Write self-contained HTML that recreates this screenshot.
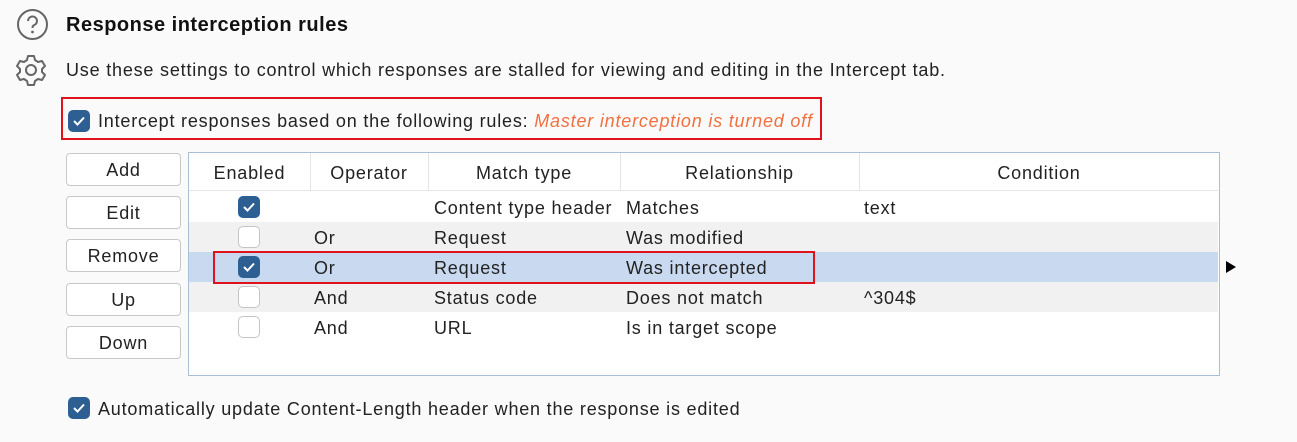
<!DOCTYPE html>
<html><head><style>
*{margin:0;padding:0;box-sizing:border-box}
body{width:1297px;height:442px;background:#fafafa;font-family:"Liberation Sans",sans-serif;color:#222;position:relative;overflow:hidden;font-size:18px;letter-spacing:0.8px}
.a{position:absolute;white-space:nowrap}
.cb{position:absolute;width:22px;height:22px;border-radius:5px;background:#2d5f93}
.cb svg{position:absolute;left:4px;top:4px}
.ub{position:absolute;width:22px;height:22px;border-radius:5px;border:1.5px solid #c4c4c4;background:#fff}
.btn{position:absolute;left:66px;width:115px;height:33px;border:1px solid #c8c8c8;border-radius:4px;background:#fff;text-align:center;line-height:33px}
.row{position:absolute;left:189px;width:1029px;height:30px}
.t{position:absolute;line-height:32px;white-space:nowrap}
.vl{position:absolute;top:153px;width:1px;height:38px;background:#e4e4e4}
</style></head><body>
<svg class="a" style="left:16px;top:8px" width="33" height="33" viewBox="0 0 33 33"><circle cx="16.5" cy="16.5" r="14.5" fill="none" stroke="#666" stroke-width="2"/><path d="M12 13a4.5 4.5 0 1 1 6 4.2c-1.3.6-1.5 1.3-1.5 2.8" fill="none" stroke="#666" stroke-width="2"/><circle cx="16.5" cy="24" r="1.4" fill="#666"/></svg>
<div class="a" style="left:66px;top:14px;font-size:20px;font-weight:bold;color:#111;letter-spacing:0.5px">Response interception rules</div>
<svg class="a" style="left:14px;top:53px" width="34" height="34" viewBox="0 0 34 34"><path d="M14 3h6l1 4 3 2 4-1 3 5-3 3v3l3 3-3 5-4-1-3 2-1 4h-6l-1-4-3-2-4 1-3-5 3-3v-3l-3-3 3-5 4 1 3-2z" fill="none" stroke="#666" stroke-width="2" stroke-linejoin="round"/><circle cx="17" cy="17" r="5" fill="none" stroke="#666" stroke-width="2"/></svg>
<div class="a" style="left:66px;top:60px">Use these settings to control which responses are stalled for viewing and editing in the Intercept tab.</div>
<div class="a" style="left:61px;top:97px;width:761px;height:43px;border:2px solid #e0121b"></div>
<div class="cb" style="left:68px;top:110px"><svg width="14" height="14"><path d="M2 7l3.5 3.5L12 3.5" fill="none" stroke="#fff" stroke-width="2"/></svg></div>
<div class="a" style="left:98px;top:111px">Intercept responses based on the following rules: <i style="color:#f07040">Master interception is turned off</i></div>
<div class="btn" style="top:153px">Add</div>
<div class="btn" style="top:196px">Edit</div>
<div class="btn" style="top:239px">Remove</div>
<div class="btn" style="top:283px">Up</div>
<div class="btn" style="top:326px">Down</div>
<div class="a" style="left:188px;top:152px;width:1032px;height:224px;border:1px solid #a8bfd8;background:#fff"></div>
<div class="a" style="left:189px;top:190px;width:1029px;height:1px;background:#e4e4e4"></div>
<div class="vl" style="left:310px"></div><div class="vl" style="left:428px"></div><div class="vl" style="left:620px"></div><div class="vl" style="left:859px"></div>
<div class="t" style="left:189px;width:121px;top:157px;text-align:center">Enabled</div>
<div class="t" style="left:310px;width:118px;top:157px;text-align:center">Operator</div>
<div class="t" style="left:428px;width:192px;top:157px;text-align:center">Match type</div>
<div class="t" style="left:620px;width:239px;top:157px;text-align:center">Relationship</div>
<div class="t" style="left:859px;width:360px;top:157px;text-align:center">Condition</div>
<div class="row" style="top:192px;background:#fff"></div>
<div class="row" style="top:222px;background:#f1f1f1"></div>
<div class="row" style="top:252px;background:#c9daf0"></div>
<div class="row" style="top:282px;background:#f1f1f1"></div>
<div class="row" style="top:312px;background:#fff"></div>
<div class="cb" style="left:238px;top:196px"><svg width="14" height="14"><path d="M2 7l3.5 3.5L12 3.5" fill="none" stroke="#fff" stroke-width="2"/></svg></div>
<div class="ub" style="left:238px;top:226px"></div>
<div class="cb" style="left:238px;top:256px"><svg width="14" height="14"><path d="M2 7l3.5 3.5L12 3.5" fill="none" stroke="#fff" stroke-width="2"/></svg></div>
<div class="ub" style="left:238px;top:286px"></div>
<div class="ub" style="left:238px;top:316px"></div>
<div class="t" style="left:434px;top:192px">Content type header</div><div class="t" style="left:626px;top:192px">Matches</div><div class="t" style="left:864px;top:192px">text</div>
<div class="t" style="left:314px;top:222px">Or</div><div class="t" style="left:434px;top:222px">Request</div><div class="t" style="left:626px;top:222px">Was modified</div>
<div class="t" style="left:314px;top:252px">Or</div><div class="t" style="left:434px;top:252px">Request</div><div class="t" style="left:626px;top:252px">Was intercepted</div>
<div class="t" style="left:314px;top:282px">And</div><div class="t" style="left:434px;top:282px">Status code</div><div class="t" style="left:626px;top:282px">Does not match</div><div class="t" style="left:864px;top:282px">^304$</div>
<div class="t" style="left:314px;top:312px">And</div><div class="t" style="left:434px;top:312px">URL</div><div class="t" style="left:626px;top:312px">Is in target scope</div>
<div class="a" style="left:213px;top:251px;width:602px;height:33px;border:2px solid #e0121b"></div>
<svg class="a" style="left:1225px;top:261px" width="12" height="12"><path d="M1 0L11 6 1 12z" fill="#000"/></svg>
<div class="cb" style="left:68px;top:397px"><svg width="14" height="14"><path d="M2 7l3.5 3.5L12 3.5" fill="none" stroke="#fff" stroke-width="2"/></svg></div>
<div class="a" style="left:98px;top:399px">Automatically update Content-Length header when the response is edited</div>
</body></html>
